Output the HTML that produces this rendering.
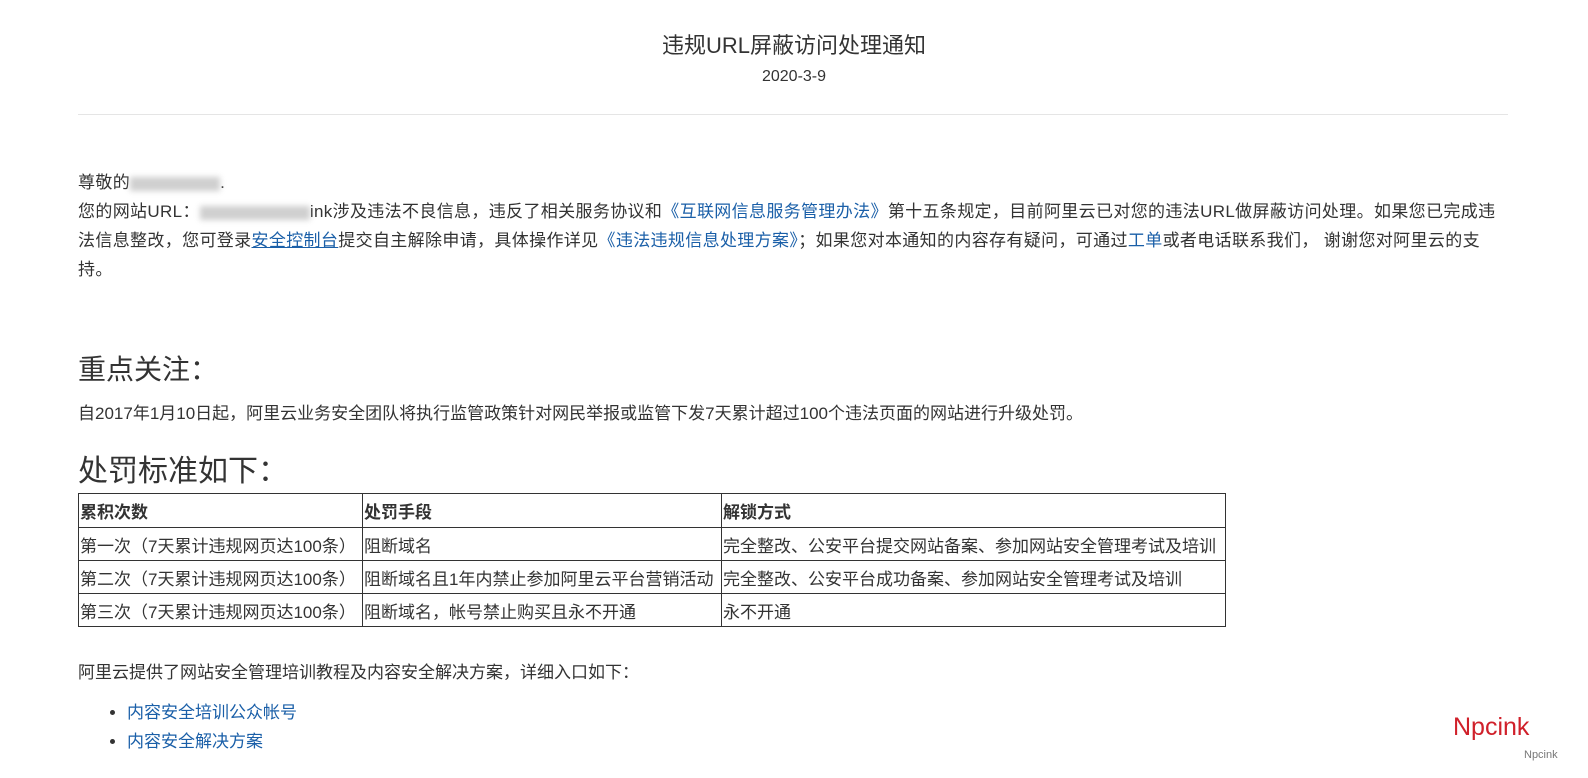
<!DOCTYPE html>
<html><head><meta charset="utf-8"><style>
body{margin:0;background:#fff;color:#333;font-family:"Liberation Sans","Noto Sans CJK SC",sans-serif;font-size:17px;width:1588px;height:778px;overflow:hidden;position:relative}
.wrap{position:absolute;left:78px;width:1432px;top:0}
.t{position:absolute;left:0;width:1432px;text-align:center}
a{color:#1a5fa8;text-decoration:none}
.blur{display:inline-block;height:14px;background:#bbb;filter:blur(3px);vertical-align:middle;opacity:.7}
p{margin:0}
table{border-collapse:collapse;position:absolute;left:0;top:493px;width:1148px;table-layout:fixed}
td,th{border:1px solid #333;text-align:left;padding:0 1px;font-size:17px;height:32px;color:#333;white-space:nowrap;overflow:hidden}
th{font-weight:bold;height:33px}
ul{position:absolute;top:698px;left:0;margin:0;padding-left:49px;line-height:29px}
</style></head><body>
<div class="wrap">
<div class="t" style="top:28px;font-size:22px;color:#333">违规URL屏蔽访问处理通知</div>
<div class="t" style="top:68px;font-size:16px">2020-3-9</div>
<div style="position:absolute;top:114px;left:0;width:1430px;height:1px;background:#e5e5e5"></div>
<div style="position:absolute;top:168px;left:0;width:1440px;line-height:29px;white-space:nowrap;letter-spacing:0.35px">
<p>尊敬的<span class="blur" style="width:90px"></span>.</p>
<p>您的网站URL：<span class="blur" style="width:110px"></span>ink涉及违法不良信息，违反了相关服务协议和<a>《互联网信息服务管理办法》</a>第十五条规定，目前阿里云已对您的违法URL做屏蔽访问处理。如果您已完成违<br>法信息整改，您可登录<a style="text-decoration:underline">安全控制台</a>提交自主解除申请，具体操作详见<a>《违法违规信息处理方案》</a>；如果您对本通知的内容存有疑问，可通过<a>工单</a>或者电话联系我们， 谢谢您对阿里云的支<br>持。</p>
</div>
<div style="position:absolute;top:348px;font-size:28px">重点关注：</div>
<div style="position:absolute;top:399px">自2017年1月10日起，阿里云业务安全团队将执行监管政策针对网民举报或监管下发7天累计超过100个违法页面的网站进行升级处罚。</div>
<div style="position:absolute;top:446px;font-size:30px">处罚标准如下：</div>
<table>
<col style="width:284px"><col style="width:359px"><col>
<tr><th>累积次数</th><th>处罚手段</th><th>解锁方式</th></tr>
<tr><td>第一次（7天累计违规网页达100条）</td><td>阻断域名</td><td>完全整改、公安平台提交网站备案、参加网站安全管理考试及培训</td></tr>
<tr><td>第二次（7天累计违规网页达100条）</td><td>阻断域名且1年内禁止参加阿里云平台营销活动</td><td>完全整改、公安平台成功备案、参加网站安全管理考试及培训</td></tr>
<tr><td>第三次（7天累计违规网页达100条）</td><td>阻断域名，帐号禁止购买且永不开通</td><td>永不开通</td></tr>
</table>
<div style="position:absolute;top:658px">阿里云提供了网站安全管理培训教程及内容安全解决方案，详细入口如下：</div>
<ul><li><a>内容安全培训公众帐号</a></li><li><a>内容安全解决方案</a></li></ul>
</div>
<div style="position:absolute;left:1453px;top:713px;font-size:25px;color:#d0202a">Npcink</div>
<div style="position:absolute;left:1524px;top:749px;font-size:11px;color:#777">Npcink</div>
</body></html>
